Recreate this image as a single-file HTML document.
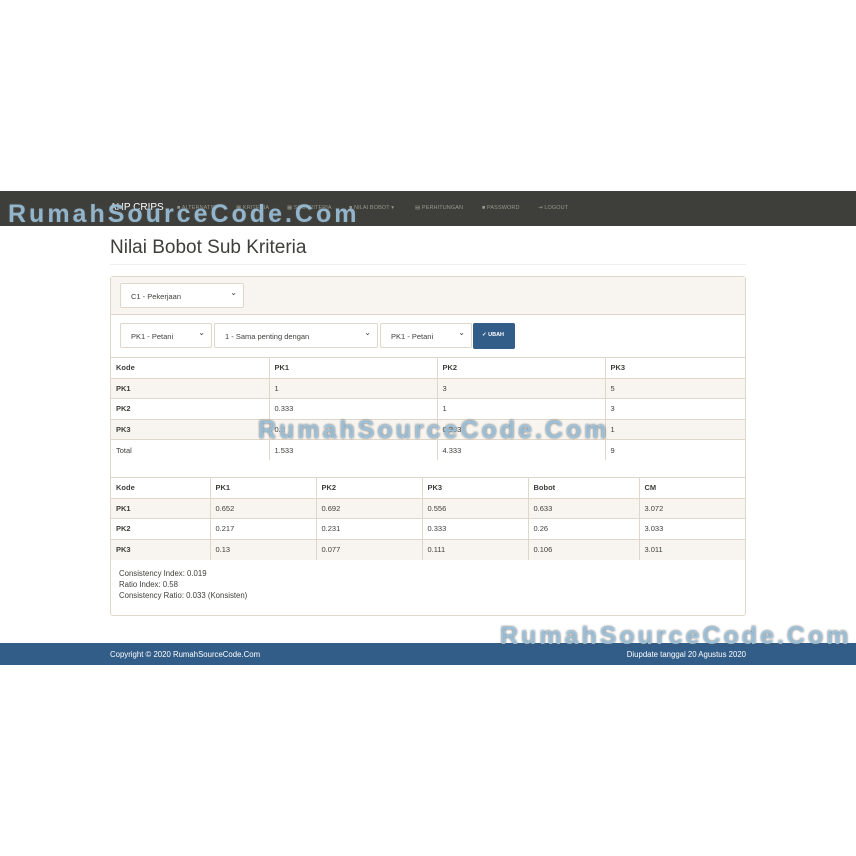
<!DOCTYPE html>
<html><head><meta charset="utf-8"><style>
*{box-sizing:border-box;margin:0;padding:0}
body{width:856px;height:856px;background:#fff;font-family:"Liberation Sans",sans-serif;position:relative;overflow:hidden;color:#3e3f3a}
.nav{position:absolute;top:191px;left:0;width:856px;height:35px;background:#3e3f3a}
.nav .brand{position:absolute;left:110px;top:11px;color:#fff;font-size:10px}
.nav .it{position:absolute;top:14px;color:#98978b;font-size:5.5px;letter-spacing:.1px}
h1{position:absolute;left:110px;top:237px;font-size:19px;font-weight:normal;color:#3e3f3a}
.hr{position:absolute;left:110px;top:264px;width:636px;height:1px;background:#eee}
.panel{position:absolute;left:110px;top:276px;width:636px;height:340px;border:1px solid #dfd7ca;border-radius:3px;background:#fff}
.ph{height:38px;background:#f8f5f0;border-bottom:1px solid #dfd7ca;position:relative}
.sel{position:absolute;height:25px;border:1px solid #dfd7ca;background:#fff;border-radius:2px;font-size:7.5px;color:#3e3f3a;padding:8px 0 0 10px}
.sel:after{content:"⌄";position:absolute;right:6px;top:4px;font-size:8px}
.btn{position:absolute;left:362px;top:8px;width:42px;height:26px;background:#325d88;border-radius:2px;color:#fff;font-size:5.5px;font-weight:bold;padding:9px 0 0 9px}
table{position:absolute;left:0;width:634px;border-collapse:collapse;font-size:7.5px}
td{height:20.5px;border-top:1px solid #dfd7ca;padding-left:5px;border-left:1px solid #dfd7ca;color:#3e3f3a}
td:first-child{border-left:none}
tr.s td{background:#f8f5f0}
.b{font-weight:bold}
.info{position:absolute;left:8px;top:291px;font-size:7.8px;line-height:11px;color:#3e3f3a}
.foot{position:absolute;top:643px;left:0;width:856px;height:22px;background:#325d88;color:#fff;font-size:7.8px}
.wm{position:absolute;font-weight:bold;color:rgba(170,215,245,.75);text-shadow:0 0 2px #555;letter-spacing:3px}
</style></head><body>
<div class="nav">
<div class="brand">AHP CRIPS</div>
<div class="it" style="left:177px">&#9632; ALTERNATIF</div>
<div class="it" style="left:236px">&#9638; KRITERIA</div>
<div class="it" style="left:287px">&#9638; SUBKRITERIA</div>
<div class="it" style="left:349px">&#9632; NILAI BOBOT ▾</div>
<div class="it" style="left:415px">&#9636; PERHITUNGAN</div>
<div class="it" style="left:482px">&#9632; PASSWORD</div>
<div class="it" style="left:538px">&#8677; LOGOUT</div>
</div>
<h1>Nilai Bobot Sub Kriteria</h1>
<div class="hr"></div>
<div class="panel">
<div class="ph"><div class="sel" style="left:9px;top:6px;width:124px">C1 - Pekerjaan</div></div>
<div style="position:relative;height:42px">
<div class="sel" style="left:9px;top:8px;width:92px">PK1 - Petani</div>
<div class="sel" style="left:103px;top:8px;width:164px">1 - Sama penting dengan</div>
<div class="sel" style="left:269px;top:8px;width:92px">PK1 - Petani</div>
<div class="btn">&#10003; UBAH</div>
</div>
<table style="top:80px">
<tr><td class="b" style="width:158px">Kode</td><td class="b" style="width:168px">PK1</td><td class="b" style="width:168px">PK2</td><td class="b">PK3</td></tr>
<tr class="s"><td class="b">PK1</td><td>1</td><td>3</td><td>5</td></tr>
<tr><td class="b">PK2</td><td>0.333</td><td>1</td><td>3</td></tr>
<tr class="s"><td class="b">PK3</td><td>0.2</td><td>0.333</td><td>1</td></tr>
<tr><td>Total</td><td>1.533</td><td>4.333</td><td>9</td></tr>
</table>
<table style="top:200px;border-top:1px solid #dfd7ca">
<tr><td class="b" style="width:99px">Kode</td><td class="b" style="width:106px">PK1</td><td class="b" style="width:106px">PK2</td><td class="b" style="width:106px">PK3</td><td class="b" style="width:111px">Bobot</td><td class="b">CM</td></tr>
<tr class="s"><td class="b">PK1</td><td>0.652</td><td>0.692</td><td>0.556</td><td>0.633</td><td>3.072</td></tr>
<tr><td class="b">PK2</td><td>0.217</td><td>0.231</td><td>0.333</td><td>0.26</td><td>3.033</td></tr>
<tr class="s"><td class="b">PK3</td><td>0.13</td><td>0.077</td><td>0.111</td><td>0.106</td><td>3.011</td></tr>
</table>
<div class="info">Consistency Index: 0.019<br>Ratio Index: 0.58<br>Consistency Ratio: 0.033 (Konsisten)</div>
</div>
<div class="foot"><span style="position:absolute;left:110px;top:7px">Copyright © 2020 RumahSourceCode.Com</span><span style="position:absolute;right:110px;top:7px">Diupdate tanggal 20 Agustus 2020</span></div>
<div class="wm" style="left:8px;top:200px;font-size:25px">RumahSourceCode.Com</div>
<div class="wm" style="left:258px;top:416px;font-size:25px">RumahSourceCode.Com</div>
<div class="wm" style="left:500px;top:622px;font-size:25px">RumahSourceCode.Com</div>
</body></html>
